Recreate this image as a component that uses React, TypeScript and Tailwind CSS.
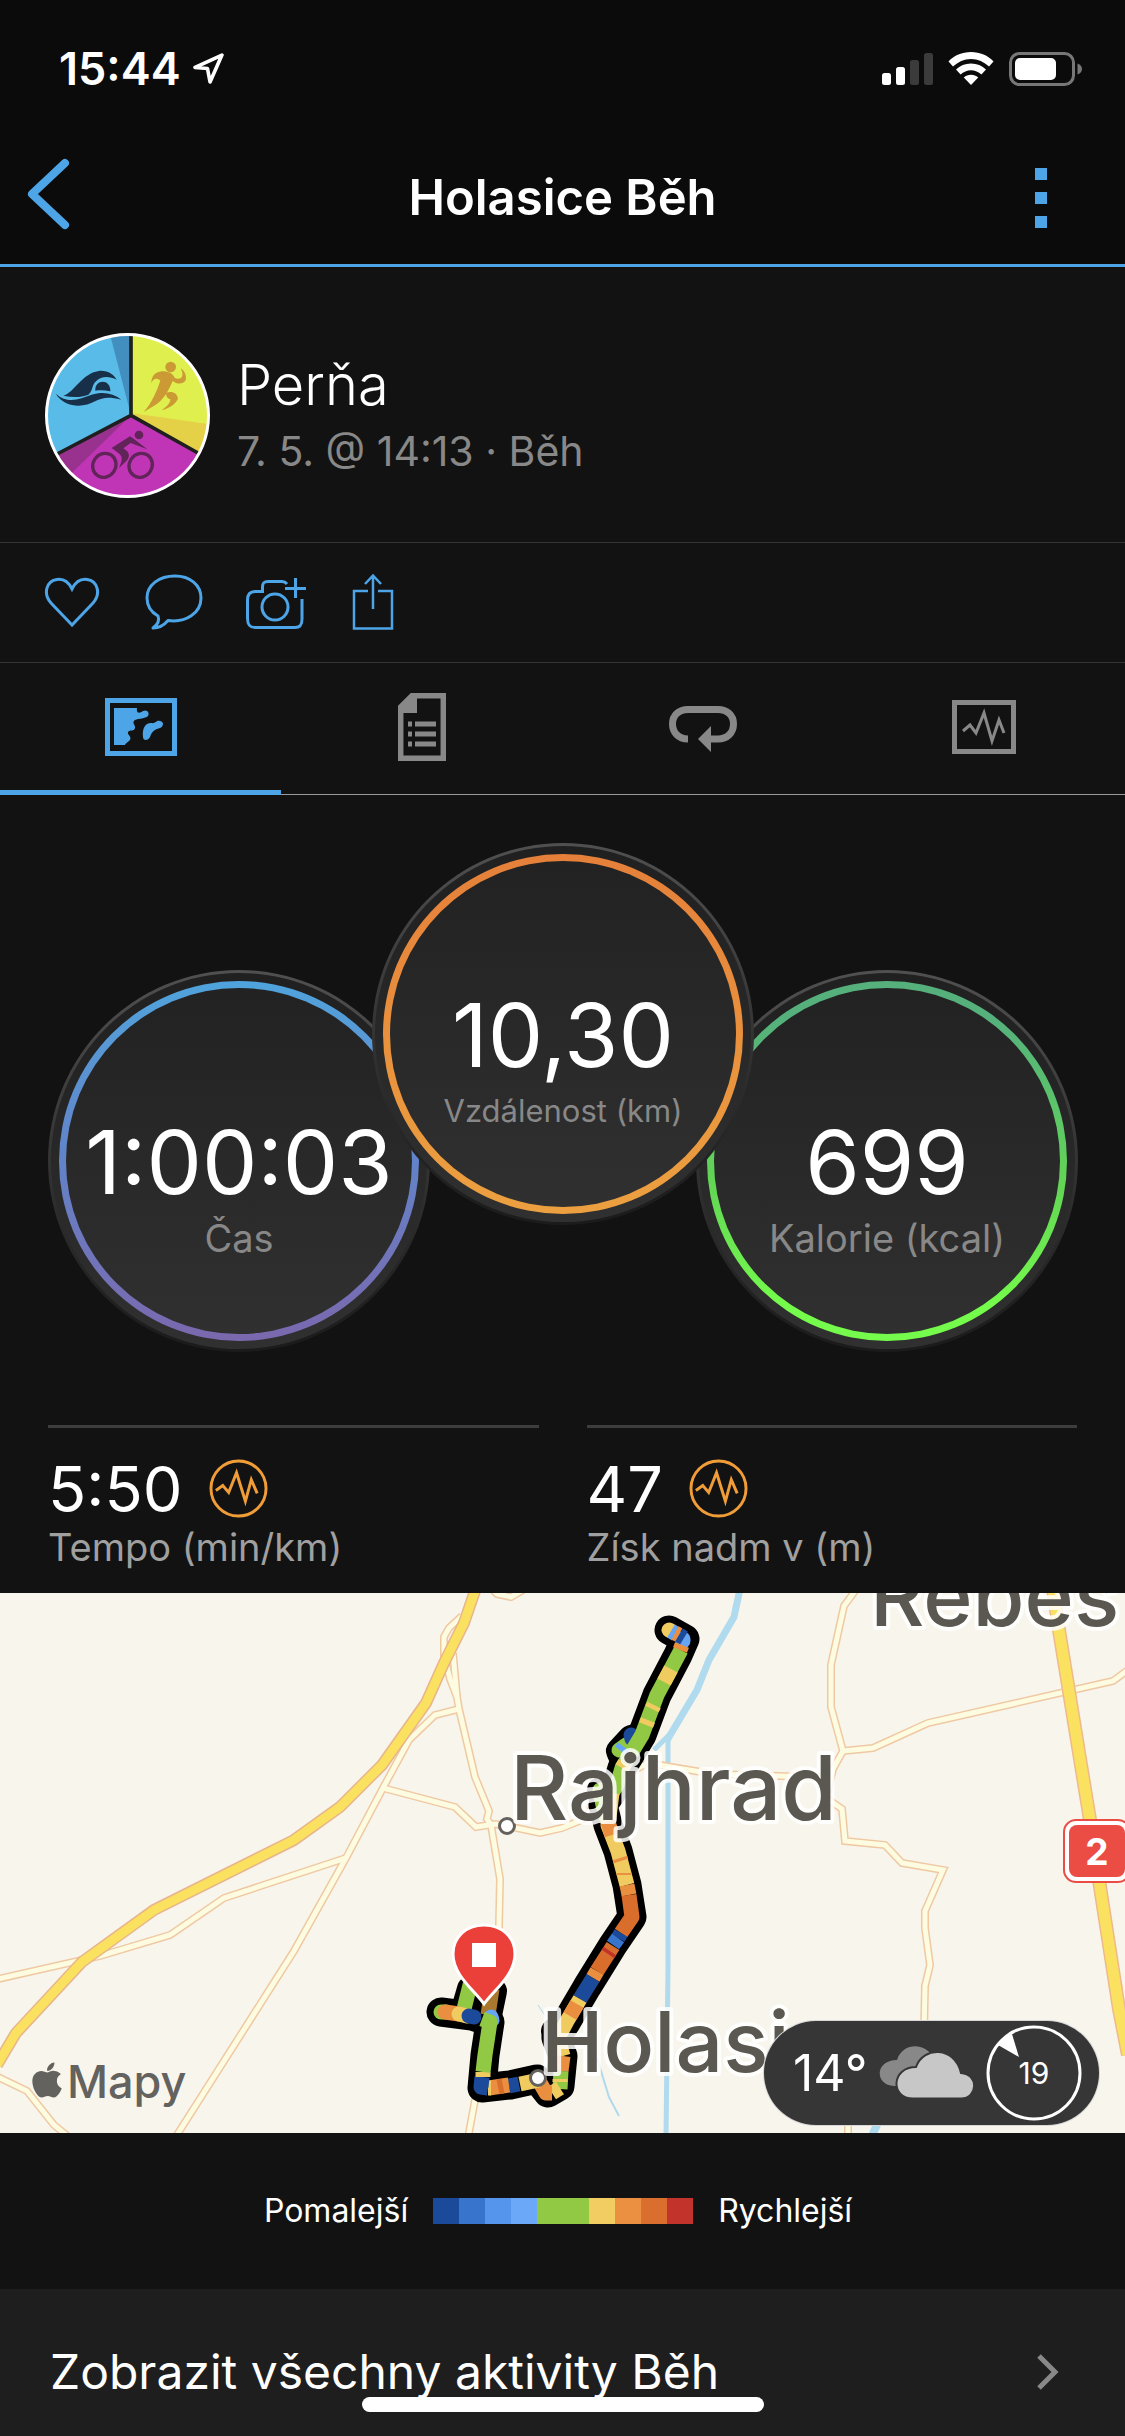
import React from "react";
import { FaApple } from "react-icons/fa";

const BLUE = "#4da5e8";

type Point = [number, number];

const toPath = (points: Point[]) =>
  points.map(([x, y], i) => `${i === 0 ? "M" : "L"}${x} ${y}`).join(" ");

function StatusBar() {
  return (
    <div className="flex h-[132px] items-start justify-between pt-[44px] pr-[42px] pl-[59px]">
      <div className="flex items-center gap-[12px]">
        <span className="text-[45px] leading-[50px] font-semibold">15:44</span>
        <svg className="-mt-[2px] h-[31px] w-[31px]" viewBox="0 0 30 30" fill="none" stroke="white" strokeWidth="3.500" strokeLinejoin="round" aria-label="Poloha">
          <path d="M28 2 L2 14 L14 15 L16.500 28 Z" />
        </svg>
      </div>
      <div className="mt-[8px] flex items-start gap-[15px]">
        <svg className="h-[34px] w-[51px]" viewBox="0 0 51 34" aria-label="Signál">
          <rect x="0" y="21" width="9" height="12" rx="2.500" fill="white" />
          <rect x="14" y="15" width="9" height="18" rx="2.500" fill="white" />
          <rect x="28" y="8" width="9" height="25" rx="2.500" fill="#3b3b3b" />
          <rect x="42" y="1" width="9" height="32" rx="2.500" fill="#3b3b3b" />
        </svg>
        <svg className="h-[34px] w-[46px]" viewBox="0 0 46 34" fill="white" aria-label="Wi-Fi">
          <path d="M23 0C14 0 6 3.500 0.500 9.500L5 14.500C10 10 16 7 23 7s13 3 18 7.500l4.500-5C40 3.500 32 0 23 0Z" />
          <path d="M23 11.500c-6 0-11 2.200-15 6l4.600 5C15.500 20 19 18.300 23 18.300s7.500 1.700 10.400 4.200l4.600-5c-4-3.800-9-6-15-6Z" />
          <path d="M23 22.800c-2.800 0-5.200 1-7.200 2.800L23 33l7.200-7.400c-2-1.800-4.400-2.800-7.200-2.800Z" />
        </svg>
        <svg className="h-[34px] w-[74px]" viewBox="0 0 74 34" aria-label="Baterie">
          <rect x="1.500" y="1.500" width="63" height="31" rx="9" fill="none" stroke="#777" strokeWidth="3" />
          <rect x="6" y="6" width="41" height="22" rx="5" fill="white" />
          <path d="M68.500 11.500c3 1 4.500 3.200 4.500 5.500s-1.500 4.500-4.500 5.500Z" fill="#777" />
        </svg>
      </div>
    </div>
  );
}

function NavBar() {
  return (
    <nav className="grid h-[132px] grid-cols-[1fr_auto_1fr] items-center pr-[78px] pl-[27px]">
      <button type="button" aria-label="Zpět" className="mb-[8px] flex h-[80px] w-[50px] items-center">
        <svg className="h-[72px] w-[44px]" viewBox="0 0 44 72" fill="none" stroke={BLUE} strokeWidth="8" strokeLinecap="round" strokeLinejoin="round">
          <path d="M38 5 L5 36 L38 67" />
        </svg>
      </button>
      <h1 className="ml-[51px] text-[49px] leading-[60px] font-semibold">Holasice Běh</h1>
      <button type="button" aria-label="Další možnosti" className="flex w-[44px] flex-col items-end gap-[12px] justify-self-end">
        <span className="size-[12px] bg-[#4da5e8]" />
        <span className="size-[12px] bg-[#4da5e8]" />
        <span className="size-[12px] bg-[#4da5e8]" />
      </button>
    </nav>
  );
}

function Avatar() {
  return (
    <svg className="size-[165px] shrink-0" viewBox="15 15 495 495" aria-label="Profilový obrázek">
      <defs>
        <clipPath id="avatar">
          <circle cx="262" cy="262" r="242" />
        </clipPath>
      </defs>
      <g clipPath="url(#avatar)">
        <path d="M273 262 V0 H0 V400 Z" fill="#58bbe8" />
        <path d="M273 262 L205 0 H273 Z" fill="#428fbf" />
        <path d="M273 262 V0 H520 V400 Z" fill="#dff04e" />
        <path d="M273 255 L520 290 V400 Z" fill="#e5d148" />
        <path d="M273 262 L30 390 V520 H520 V402 Z" fill="#c035b5" />
        <path d="M273 262 L90 440 L30 390 Z" fill="#98328e" />
        <path d="M273 262 V10 M273 262 L40 384 M273 262 L490 384" stroke="#1f1f1f" strokeWidth="11" fill="none" />
        <g fill="#182f49">
          <path d="M70 203 C105 192 125 135 180 128 C205 127 222 140 230 155 C205 142 180 145 165 163 C155 175 158 190 145 200 C120 210 95 208 70 203 Z" />
          <path d="M166 188 C164 152 213 152 211 190 C196 187 182 186 166 188 Z" />
          <path d="M47 197 C85 230 120 212 155 200 C190 190 220 196 244 215 C205 206 190 208 165 220 C130 240 75 240 47 197 Z" />
        </g>
        <g fill="#cb9a35">
          <circle cx="392" cy="117" r="16" />
          <path d="M334 165 C334 145 345 132 365 130 C390 130 398 138 404 149 C414 155 425 152 427 143 C429 133 424 128 423 121 C437 132 442 150 435 160 C425 170 410 168 398 159 C385 190 370 218 340 235 L311 252 C335 225 350 190 361 158 C350 148 340 152 334 165 Z" />
          <path d="M378 194 C398 188 412 196 414 212 C406 228 390 240 365 247 C382 235 391 224 391 214 C382 212 378 205 378 194 Z" />
        </g>
        <g fill="none" stroke="#602458" strokeWidth="10">
          <ellipse cx="193" cy="412" rx="34" ry="37" transform="rotate(35 193 412)" />
          <ellipse cx="302" cy="412" rx="34" ry="37" transform="rotate(35 302 412)" />
        </g>
        <g fill="#602458">
          <circle cx="297" cy="321" r="13" />
          <path d="M215 360 L270 325 L282 333 L322 364 L272 345 L250 361 C268 372 272 385 260 398 L237 420 C248 395 248 385 236 376 Z" />
        </g>
      </g>
      <circle cx="262.500" cy="262.500" r="243" fill="none" stroke="white" strokeWidth="9" />
    </svg>
  );
}

function Profile() {
  return (
    <section className="flex h-[276px] items-center gap-[27px] border-b border-[#333] px-[45px] pt-[22px]">
      <Avatar />
      <div>
        <h2 className="text-[56px] leading-[70px] font-light">Perňa</h2>
        <p className="text-[41px] leading-[62px] text-[#888]">7. 5. @ 14:13 · Běh</p>
      </div>
    </section>
  );
}

function SocialActions() {
  return (
    <section className="flex h-[120px] items-center gap-[45px] border-b border-[#333] px-[44px] pb-[2px]">
      <button type="button" aria-label="To se mi líbí">
        <svg className="h-[58px] w-[56px]" viewBox="0 0 56 58" fill="none" stroke={BLUE} strokeWidth="3">
          <path d="M28 52 L7 30 C-1 21 2 8 13 6.500 C20 5.500 25 10 28 16 C31 10 36 5.500 43 6.500 C54 8 57 21 49 30 Z" />
        </svg>
      </button>
      <button type="button" aria-label="Komentář">
        <svg className="h-[58px] w-[58px]" viewBox="0 0 58 58" fill="none" stroke={BLUE} strokeWidth="3" strokeLinejoin="round">
          <path d="M30 3 C14 3 2 12 2 25 C2 33 6 39 13 43 C15 48 12 52 8 55 C15 55 20 51 23 47.500 C41 50 56 40 56 25 C56 12 45 3 30 3 Z" />
        </svg>
      </button>
      <button type="button" aria-label="Přidat fotku" className="-ml-[3px]">
        <svg className="h-[58px] w-[62px]" viewBox="0 0 62 58" fill="none" stroke={BLUE} strokeWidth="3">
          <path d="M42 11 C40 8.500 39 8.500 37 8.500 H23 C19 8.500 17.500 10 17.500 14 V18.500 H10 C4 18.500 2.500 22 2.500 27 V45 C2.500 51 4 54.500 10 54.500 H50 C56 54.500 57 51 57 46 V26" />
          <circle cx="30" cy="34" r="13" />
          <path d="M50.500 5 V25 M40 15.500 H61" />
        </svg>
      </button>
      <button type="button" aria-label="Sdílet">
        <svg className="h-[58px] w-[42px]" viewBox="0 0 42 58" fill="none" stroke={BLUE} strokeWidth="2.500">
          <path d="M16 18 H2 V55.500 H40 V18 H26 M21 36 V3 M13 11 L21 2.500 L29 11" />
        </svg>
      </button>
    </section>
  );
}

function Tabs() {
  const tab = "flex flex-1 items-center justify-center pb-[3px]";
  return (
    <div role="tablist" className="flex h-[132px] border-b border-[#999]">
      <button type="button" role="tab" aria-selected="true" aria-label="Mapa" className="relative flex flex-1 items-center justify-center pb-[3px]">
        <svg className="h-[58px] w-[72px]" viewBox="0 0 72 58" fill={BLUE}>
          <rect x="2.500" y="2.500" width="67" height="53" fill="none" stroke={BLUE} strokeWidth="5" />
          <path d="M9 10 H32 C31 15 34 16 38 13 C42 11 45 15 43 18 C40 21 34 20 30 22 C26 25 31 27 30 30 C29 34 25 31 23 34 C22 37 27 38 25 42 C22 45 21 45 20 47 H9 Z" />
          <path d="M38 39 C37 31 40 25 46 25 C51 26 51 22 55 23 C60 24 58 29 55 30 C48 32 47 34 45 39 C43 43 38 43 38 39 Z" />
        </svg>
        <span className="absolute inset-x-0 -bottom-px h-[5px] bg-[#4da5e8]" />
      </button>
      <button type="button" role="tab" aria-selected="false" aria-label="Podrobnosti" className={tab}>
        <svg className="h-[68px] w-[48px]" viewBox="0 0 48 68" fill="none" stroke="#888" strokeWidth="5.500">
          <path d="M2.700 14 L14 2.700 H45.300 V65.300 H2.700 Z" />
          <path d="M1 16 L15 1 H19 V20 H1 Z" fill="#888" stroke="none" />
          <path d="M17 31 H38 M17 41 H38 M17 51 H38 M10 31 h4 M10 41 h4 M10 51 h4" strokeWidth="5" />
        </svg>
      </button>
      <button type="button" role="tab" aria-selected="false" aria-label="Okruhy" className={tab}>
        <svg className="mt-[4px] h-[48px] w-[68px]" viewBox="0 0 68 48" fill="none" stroke="#888" strokeWidth="7">
          <path d="M19 34 C9 34 3.500 27 3.500 19 C3.500 10 10 4.500 19 4.500 H49 C58 4.500 64.500 10 64.500 19 C64.500 28 58 34 49 34 H40" />
          <path d="M42 21 L29 34 L42 47 Z" fill="#888" stroke="none" />
        </svg>
      </button>
      <button type="button" role="tab" aria-selected="false" aria-label="Grafy" className={tab}>
        <svg className="h-[54px] w-[64px]" viewBox="0 0 64 54" fill="none" stroke="#888">
          <rect x="2.500" y="2.500" width="59" height="49" strokeWidth="5" />
          <path d="M11 31 L18 25 L24 33 L32 13 L40 41 L47 20 L52 33" strokeWidth="3" />
        </svg>
      </button>
    </div>
  );
}

interface GaugeProps {
  value: string;
  label: string;
  ring: string;
  className: string;
  labelClass: string;
}

function Gauge({ value, label, ring, className, labelClass }: GaugeProps) {
  return (
    <div className={`size-[382px] shrink-0 rounded-full bg-linear-to-b from-[#505050] via-[#2e2e2e] via-60% to-[#1b1b1b] p-[3px] ${className}`}>
      <div className="size-full rounded-full bg-linear-to-b from-[#202020] to-[#303030] p-[8px]">
        <div className={`size-full rounded-full bg-linear-to-b p-[7px] ${ring}`}>
          <div className="flex size-full flex-col items-center rounded-full bg-linear-to-b from-[#222] to-[#303030] pt-[121px]">
            <span className="text-[88px] leading-[106px]">{value}</span>
            <span className={`leading-[46px] text-[#888] ${labelClass}`}>{label}</span>
          </div>
        </div>
      </div>
    </div>
  );
}

function Gauges() {
  return (
    <section className="flex items-start justify-between px-[48px] pt-[48px]">
      <Gauge value="1:00:03" label="Čas" ring="from-[#4fa3dc] via-[#6283c8] to-[#7a68ae]" className="mt-[127px]" labelClass="text-[38px]" />
      <Gauge value="10,30" label="Vzdálenost (km)" ring="from-[#e5803a] to-[#eca040]" className="relative z-10 -mx-[58px]" labelClass="text-[31px]" />
      <Gauge value="699" label="Kalorie (kcal)" ring="from-[#55b07c] from-10% via-[#62d455] via-55% to-[#74fb4b] to-90%" className="mt-[127px]" labelClass="text-[38px]" />
    </section>
  );
}

function Stat({ value, label }: { value: string; label: string }) {
  return (
    <div className="flex-1 border-t-3 border-[#3d3d3d] pt-[27px]">
      <div className="flex items-center gap-[26px]">
        <span className="text-[63px] leading-[68px]">{value}</span>
        <button type="button" aria-label={`Graf: ${label}`} className="-mt-[2px]">
          <svg className="size-[59px]" viewBox="0 0 60 60" fill="none" stroke="#f09d38" strokeWidth="3">
            <circle cx="30" cy="30" r="28" />
            <path d="M7 32 L14 27 L20 34 L28 14 L37 43 L43 21 L49 35" />
          </svg>
        </button>
      </div>
      <p className="text-[38px] leading-[48px] text-[#a0a0a0]">{label}</p>
    </div>
  );
}

const MINOR_ROADS: Point[][] = [
  [[462, 23], [449, 35], [444, 44], [444, 62], [450, 86], [457, 104], [459, 116], [475, 184], [489, 218], [487, 226], [491, 232], [500, 286], [499, 332], [499, 400], [475, 507], [468, 545]],
  [[453, 60], [457, 104]],
  [[459, 116], [435, 122], [409, 147], [383, 195], [346, 265], [294, 358], [175, 545]],
  [[383, 195], [455, 214], [476, 234], [495, 231], [507, 233], [540, 240], [562, 235], [584, 226], [610, 190], [648, 170], [713, 181], [813, 184], [826, 184]],
  [[346, 265], [224, 305], [170, 342], [100, 363], [-2, 386]],
  [[-2, 484], [27, 498], [54, 532], [70, 545]],
  [[493, -3], [497, 1], [511, 4], [523, -3]],
  [[855, -2], [844, 13], [831, 72], [831, 114], [843, 158], [833, 176], [826, 205], [842, 216], [845, 248], [885, 252], [902, 270], [943, 277], [925, 318], [925, 335], [930, 372], [925, 393], [924, 440]],
  [[843, 158], [873, 155], [928, 130], [1113, 88], [1128, 77]],
  [[848, 520], [848, 545]],
];

const MAIN_ROAD: Point[] = [[476, -5], [464, 30], [444, 70], [426, 110], [382, 172], [340, 214], [294, 247], [154, 317], [82, 369], [16, 440], [-3, 472]];
const HIGHWAY: Point[] = [[1053, -5], [1059, 37], [1090, 227], [1101, 300], [1119, 416], [1128, 462]];

const ROUTE: Point[] = [[669, 37], [685, 46], [678, 62], [657, 102], [642, 142], [622, 175], [617, 192], [603, 212], [608, 232], [618, 258], [627, 292], [632, 324], [613, 352], [587, 394], [567, 428], [556, 445], [563, 463], [560, 493], [548, 500], [537, 486], [510, 492], [482, 495], [485, 462], [490, 429], [472, 423], [441, 419]];
const SPURS: Point[][] = [[[463, 420], [470, 396]], [[489, 422], [494, 398]], [[642, 142], [631, 145], [619, 158], [624, 170]], [[603, 212], [600, 197]], [[556, 448], [554, 438]]];

const DEEP = "#1c4a9a";
const MID = "#3873cc";
const SKY = "#66a4f4";
const GREEN = "#92c944";
const SAND = "#f0cb60";
const ORANGE = "#ea8f40";
const RUST = "#d96e2c";
const RED = "#c2332c";

const PACE: { color: string; points: Point[] }[] = [
  { color: GREEN, points: [[463, 420], [470, 392]] },
  { color: "#a9782e", points: [[488, 422], [492, 396]] },
  { color: GREEN, points: [[441, 419], [446, 419]] },
  { color: ORANGE, points: [[445, 419], [459, 421]] },
  { color: SAND, points: [[459, 421], [467, 423]] },
  { color: DEEP, points: [[469, 423], [474, 424]] },
  { color: SKY, points: [[491, 424], [492, 427]] },
  { color: GREEN, points: [[619, 157], [626, 152]] },
  { color: DEEP, points: [[631, 142], [632, 146]] },
  { color: GREEN, points: [[600, 197], [603, 212], [606, 224]] },
  { color: SKY, points: [[683, 46], [683, 48]] },
  { color: SAND, points: [[669, 37], [671, 38]] },
  { color: GREEN, points: [[681, 57], [657, 102], [642, 142], [622, 175], [617, 192], [604, 212]] },
  { color: SKY, points: [[671, 38], [676, 41]] },
  { color: ORANGE, points: [[675, 40], [679, 42]] },
  { color: DEEP, points: [[679, 42], [684, 45]] },
  { color: ORANGE, points: [[682, 52], [680, 57]] },
  { color: SAND, points: [[671, 76], [664, 89]] },
  { color: SAND, points: [[654, 112], [652, 116]] },
  { color: SAND, points: [[648, 127], [646, 132]] },
  { color: SAND, points: [[625, 170], [622, 175]] },
  { color: SKY, points: [[624, 154], [621, 158]] },
  { color: SAND, points: [[612, 200], [608, 232], [618, 258], [627, 292]] },
  { color: ORANGE, points: [[608, 229], [612, 242]] },
  { color: ORANGE, points: [[620, 265], [621, 268]] },
  { color: ORANGE, points: [[624, 280], [624, 282]] },
  { color: ORANGE, points: [[627, 292], [629, 302]] },
  { color: RUST, points: [[629, 302], [632, 324], [621, 340]] },
  { color: DEEP, points: [[621, 340], [618, 345]] },
  { color: MID, points: [[618, 345], [613, 352]] },
  { color: RUST, points: [[613, 353], [597, 378]] },
  { color: RED, points: [[610, 358], [608, 361]] },
  { color: ORANGE, points: [[597, 378], [593, 385]] },
  { color: DEEP, points: [[593, 385], [580, 406]] },
  { color: SAND, points: [[580, 406], [567, 428], [558, 445], [563, 463]] },
  { color: ORANGE, points: [[577, 411], [570, 423]] },
  { color: ORANGE, points: [[563, 463], [561, 478]] },
  { color: GREEN, points: [[561, 478], [560, 496]] },
  { color: SAND, points: [[560, 486], [560, 489]] },
  { color: SAND, points: [[560, 495], [552, 500]] },
  { color: ORANGE, points: [[552, 500], [546, 500], [539, 488]] },
  { color: SAND, points: [[539, 487], [520, 491]] },
  { color: DEEP, points: [[519, 491], [509, 493]] },
  { color: ORANGE, points: [[509, 492], [489, 495]] },
  { color: RUST, points: [[503, 493], [498, 494]] },
  { color: SAND, points: [[491, 495], [488, 495]] },
  { color: DEEP, points: [[488, 495], [481, 494], [482, 484]] },
  { color: SAND, points: [[483, 484], [483, 479]] },
  { color: GREEN, points: [[483, 479], [485, 462], [490, 429], [482, 426]] },
];

function Weather() {
  return (
    <div className="absolute right-[25px] bottom-[7px] flex h-[106px] w-[337px] items-center rounded-full border border-white/80 bg-[#363636] pl-[29px]">
      <span className="w-[84px] text-[50px] leading-[60px]">14°</span>
      <svg className="ml-[2px] h-[54px] w-[96px]" viewBox="0 0 96 54" aria-label="Oblačno">
        <path d="M15 40 C-5 39 -4 14 18 14 C24 -4 46 -3 53 10 L30 40 Z" fill="#888" />
        <path d="M34 52.500 C11 52.500 12 21 37 21 C44 0 76 0 82 27 C100 28 99 52.500 82 52.500 Z" fill="#c7c7c7" stroke="#363636" strokeWidth="2" />
      </svg>
      <div className="relative ml-[11px] flex size-[96px] items-center justify-center">
        <svg className="absolute inset-0 size-full" viewBox="0 0 96 96" aria-label="Směr větru">
          <circle cx="48" cy="48" r="46" fill="none" stroke="white" strokeWidth="3" />
          <path d="M12 20 C16 15 21 11 26 9 L33 32 Z" fill="white" />
        </svg>
        <span className="text-[30px] leading-[36px]">19</span>
      </div>
    </div>
  );
}

function RouteMap() {
  return (
    <section className="relative mt-[22px] h-[540px] overflow-hidden bg-[#f8f5ec]" aria-label="Mapa trasy">
      <svg className="h-full w-full" viewBox="0 0 1125 540" preserveAspectRatio="xMidYMid slice" fill="none">
        <g stroke="#b0daed">
          <path d="M740 -4 L734 24 L709 67 L697 97 L666 149" strokeWidth="7" />
          <path d="M654 157 L668 143 V374 L666 545" strokeWidth="5" />
          <path d="M538 412 L546 424" strokeWidth="1" />
          <path d="M597 465 L609 504 L619 523" strokeWidth="2" />
          <path d="M880 525 L871 545" strokeWidth="8" />
        </g>
        {MINOR_ROADS.map((road, i) => (
          <path key={i} d={toPath(road)} stroke="#efc9a4" strokeWidth="8" />
        ))}
        {MINOR_ROADS.map((road, i) => (
          <path key={i} d={toPath(road)} stroke="#fdfce0" strokeWidth="5" />
        ))}
        <path d={toPath(MAIN_ROAD)} stroke="#e8b48c" strokeWidth="12" />
        <path d={toPath(MAIN_ROAD)} stroke="#fae160" strokeWidth="9" />
        <path d={toPath(HIGHWAY)} stroke="#efb98e" strokeWidth="14" />
        <path d={toPath(HIGHWAY)} stroke="#fae160" strokeWidth="11" />
        <g stroke="black" strokeWidth="29" strokeLinejoin="round" strokeLinecap="round">
          <path d={toPath(ROUTE)} />
          {SPURS.map((spur, i) => (
            <path key={i} d={toPath(spur)} strokeWidth="26" />
          ))}
        </g>
        {PACE.map(({ color, points }, i) => (
          <path key={i} d={toPath(points)} stroke={color} strokeWidth="15" strokeLinejoin="round" strokeLinecap={i < 12 && i !== 1 ? "round" : "butt"} />
        ))}
        <g fill="white" stroke="#65625e" strokeWidth="3">
          <circle cx="507" cy="233" r="7.500" />
          <circle cx="538" cy="485" r="7.500" />
        </g>
        <g fill="#5b5751" stroke="white" strokeOpacity="0.85" strokeWidth="8" strokeLinejoin="round" paintOrder="stroke" fontFamily="Inter, sans-serif" fontWeight="500">
          <text x="510" y="227" fontSize="90">Rajhrad</text>
          <text x="541" y="479" fontSize="84">Holasi</text>
          <text x="870" y="33" fontSize="84">Rebes</text>
        </g>
        <path d="M484 411 C474 397 453 382 453 361 C453 344 466 332 484 332 C502 332 515 344 515 361 C515 382 494 397 484 411 Z" fill="#eb4039" stroke="white" strokeWidth="3" />
        <rect x="472" y="350" width="24" height="24" fill="white" />
      </svg>
      <div className="absolute top-[226px] -right-[6px] flex h-[64px] w-[68px] items-center justify-center rounded-[13px] border-2 border-[#eb4d45] bg-white p-[4px]">
        <span className="flex size-full items-center justify-center rounded-[8px] bg-[#eb4d45] text-[37px] leading-none font-bold">2</span>
      </div>
      <a href="#mapy" className="absolute bottom-[26px] left-[27px] flex items-center text-[#63625e]">
        <FaApple className="-mt-[4px] size-[40px]" />
        <span className="text-[45px] leading-[50px] font-medium">Mapy</span>
      </a>
      <Weather />
    </section>
  );
}

function Legend() {
  return (
    <section className="flex h-[156px] items-center justify-center gap-[25px] pr-[9px] text-[32px] leading-[40px]">
      <span>Pomalejší</span>
      <div className="flex h-[26px] w-[260px]">
        <span className="flex-1 bg-[#1c4a9a]" />
        <span className="flex-1 bg-[#3873cc]" />
        <span className="flex-1 bg-[#5595ec]" />
        <span className="flex-1 bg-[#6ca8f8]" />
        <span className="flex-2 bg-[#92c944]" />
        <span className="flex-1 bg-[#f2cd62]" />
        <span className="flex-1 bg-[#ea9040]" />
        <span className="flex-1 bg-[#da6e2e]" />
        <span className="flex-1 bg-[#c2332c]" />
      </div>
      <span>Rychlejší</span>
    </section>
  );
}

export default function App() {
  return (
    <div className="relative flex min-h-screen flex-col overflow-x-hidden bg-[#121212] font-['Inter',sans-serif] text-white">
      <header className="border-b-3 border-[#4da5e8] bg-[#0b0b0b]">
        <StatusBar />
        <NavBar />
      </header>
      <main className="flex flex-1 flex-col">
        <Profile />
        <SocialActions />
        <Tabs />
        <Gauges />
        <section className="mt-[73px] flex gap-[48px] px-[48px]">
          <Stat value="5:50" label="Tempo (min/km)" />
          <Stat value="47" label="Získ nadm v (m)" />
        </section>
        <RouteMap />
        <Legend />
        <a href="#aktivity" className="flex flex-1 items-start justify-between bg-[#1e1e1e] px-[50px] pt-[53px] pb-[30px]">
          <span className="text-[48px] leading-[60px]">Zobrazit všechny aktivity Běh</span>
          <svg className="mt-[12px] mr-[15px] h-[36px] w-[24px]" viewBox="0 0 24 36" fill="none" stroke="#888" strokeWidth="5">
            <path d="M3 2 L19 18 L3 34" />
          </svg>
        </a>
      </main>
      <div className="absolute bottom-[24px] left-1/2 h-[15px] w-[402px] -translate-x-1/2 rounded-full bg-white" />
    </div>
  );
}
